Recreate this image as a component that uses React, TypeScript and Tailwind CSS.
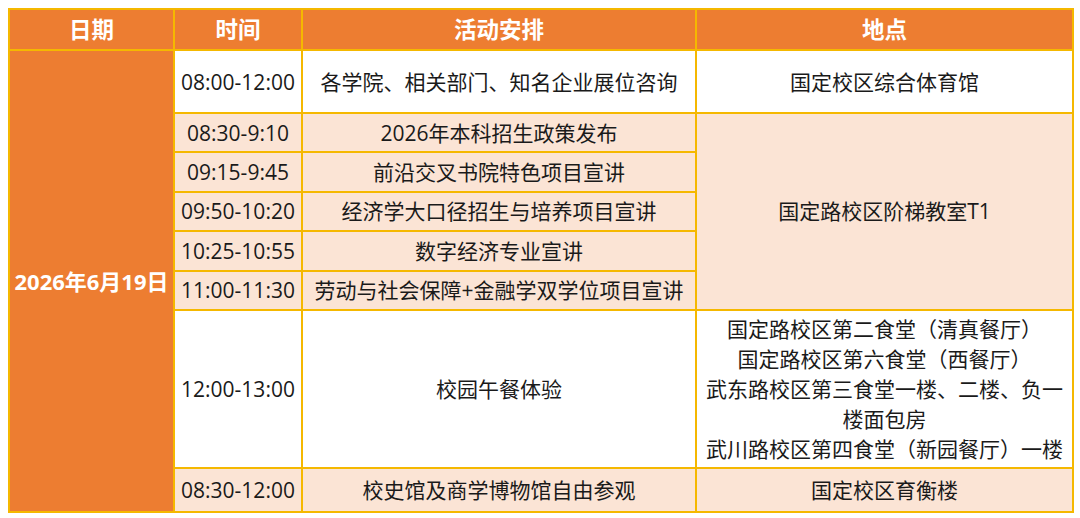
const font = { fontFamily: "'Open Sans', 'Noto Sans CJK SC', sans-serif" };

const rows = [
  { time: "08:30-9:10", act: "2026年本科招生政策发布" },
  { time: "09:15-9:45", act: "前沿交叉书院特色项目宣讲" },
  { time: "09:50-10:20", act: "经济学大口径招生与培养项目宣讲" },
  { time: "10:25-10:55", act: "数字经济专业宣讲" },
  { time: "11:00-11:30", act: "劳动与社会保障+金融学双学位项目宣讲" },
];

const cell = "border-2 border-[#F5B800] text-center align-middle p-0";

export default function App() {
  return (
    <div className="w-[1080px] h-[518px] bg-white pt-[8px] pl-[8px]" style={font}>
      <table className="border-collapse table-fixed w-[1064px] text-[21px] text-[#1a1a1a] leading-[28px]">
        <colgroup>
          <col className="w-[165px]" />
          <col className="w-[128px]" />
          <col className="w-[394px]" />
          <col className="w-[377px]" />
        </colgroup>
        <thead>
          {/* header */}
          <tr className="h-[41px] bg-[#ED7D31] text-white font-bold text-[22.5px]">
            <th className={cell}>日期</th>
            <th className={cell}>时间</th>
            <th className={cell}>活动安排</th>
            <th className={cell}>地点</th>
          </tr>
        </thead>
        <tbody>
          <tr className="h-[63px]">
            <td rowSpan={8} className={`${cell} bg-[#ED7D31] text-white font-bold text-[22px]`}>
              2026年6月19日
            </td>
            <td className={cell}>08:00-12:00</td>
            <td className={cell}>各学院、相关部门、知名企业展位咨询</td>
            <td className={cell}>国定校区综合体育馆</td>
          </tr>
          {rows.map((r, i) => (
            <tr key={r.time} className="h-[39.4px] bg-[#FBE4D5]">
              <td className={cell}>{r.time}</td>
              <td className={cell}>{r.act}</td>
              {i === 0 && (
                <td rowSpan={5} className={cell}>
                  国定路校区阶梯教室T1
                </td>
              )}
            </tr>
          ))}
          <tr className="h-[158px]">
            <td className={cell}>12:00-13:00</td>
            <td className={cell}>校园午餐体验</td>
            <td className={`${cell} px-[8px] leading-[30px]`}>
              <div>国定路校区第二食堂（清真餐厅）</div>
              <div>国定路校区第六食堂（西餐厅）</div>
              <div>武东路校区第三食堂一楼、二楼、负一楼面包房</div>
              <div>武川路校区第四食堂（新园餐厅）一楼</div>
            </td>
          </tr>
          <tr className="h-[44px] bg-[#FBE4D5]">
            <td className={cell}>08:30-12:00</td>
            <td className={cell}>校史馆及商学博物馆自由参观</td>
            <td className={cell}>国定校区育衡楼</td>
          </tr>
        </tbody>
      </table>
    </div>
  );
}
